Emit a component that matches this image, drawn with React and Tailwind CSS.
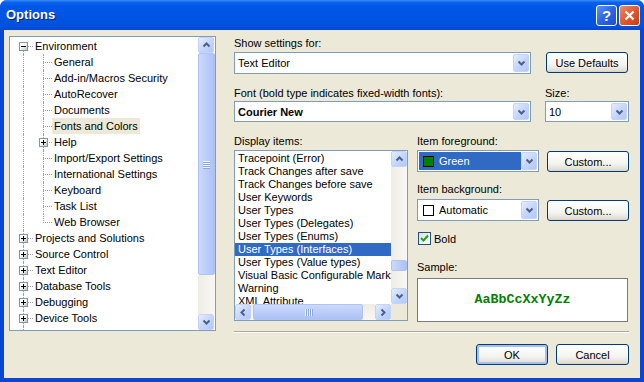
import React from "react";

const FONT = "font-['Liberation_Sans',Arial,sans-serif]";

const tree = [
  { l: 0, t: "Environment", box: "minus", first: true },
  { l: 1, t: "General" },
  { l: 1, t: "Add-in/Macros Security" },
  { l: 1, t: "AutoRecover" },
  { l: 1, t: "Documents" },
  { l: 1, t: "Fonts and Colors", sel: true },
  { l: 1, t: "Help", box: "plus" },
  { l: 1, t: "Import/Export Settings" },
  { l: 1, t: "International Settings" },
  { l: 1, t: "Keyboard" },
  { l: 1, t: "Task List" },
  { l: 1, t: "Web Browser", last: true },
  { l: 0, t: "Projects and Solutions", box: "plus" },
  { l: 0, t: "Source Control", box: "plus" },
  { l: 0, t: "Text Editor", box: "plus" },
  { l: 0, t: "Database Tools", box: "plus" },
  { l: 0, t: "Debugging", box: "plus" },
  { l: 0, t: "Device Tools", box: "plus" },
  { l: 0, t: "", id: "more" },
];

const items = [
  "Tracepoint (Error)",
  "Track Changes after save",
  "Track Changes before save",
  "User Keywords",
  "User Types",
  "User Types (Delegates)",
  "User Types (Enums)",
  "User Types (Interfaces)",
  "User Types (Value types)",
  "Visual Basic Configurable Marker",
  "Warning",
  "XML Attribute",
];

function Chevron({ dir = "down" }) {
  const pts = {
    down: "1.5,1.5 4.5,4.5 7.5,1.5",
    up: "1.5,4.5 4.5,1.5 7.5,4.5",
    left: "4.5,1.5 1.5,4.5 4.5,7.5",
    right: "1.5,1.5 4.5,4.5 1.5,7.5",
  };
  const vertical = dir === "up" || dir === "down";
  return (
    <svg
      width={vertical ? 9 : 6}
      height={vertical ? 6 : 9}
      viewBox={vertical ? "0 0 9 6" : "0 0 6 9"}
    >
      <polyline points={pts[dir]} fill="none" stroke="#4d6185" strokeWidth="2" />
    </svg>
  );
}

function SbButton({ dir }) {
  return (
    <div className="flex h-[16px] w-[16px] shrink-0 items-center justify-center rounded-[2px] border border-[#c4d4f8] bg-[linear-gradient(135deg,#e4ecfe,#c4d5fc_55%,#b3c7f5)]">
      <Chevron dir={dir} />
    </div>
  );
}

function Grip({ vertical }) {
  return vertical ? (
    <div className="flex flex-col gap-[1px]">
      {[0, 1, 2, 3].map((i) => (
        <div key={i} className="h-[1px] w-[7px] bg-[#eef3fe] shadow-[0_1px_0_#8ca7e6]" />
      ))}
    </div>
  ) : (
    <div className="flex gap-[1px]">
      {[0, 1, 2, 3].map((i) => (
        <div key={i} className="h-[7px] w-[1px] bg-[#eef3fe] shadow-[1px_0_0_#8ca7e6]" />
      ))}
    </div>
  );
}

function ComboButton() {
  return (
    <div className="flex h-full w-[16px] shrink-0 items-center justify-center rounded-[2px] border border-[#c4d4f8] bg-[linear-gradient(135deg,#e4ecfe,#c4d5fc_55%,#b3c7f5)]">
      <Chevron dir="down" />
    </div>
  );
}

function XpButton({ children, className = "", isDefault }) {
  return (
    <div
      className={`flex h-[21px] items-center justify-center rounded-[3px] border border-[#003c74] bg-[linear-gradient(to_bottom,#ffffff,#f4f4f0_60%,#e3e0d6_90%,#d6d0c5)] text-[11px] text-black ${
        isDefault ? "shadow-[inset_0_0_0_2px_#a7bff0]" : ""
      } ${className}`}
    >
      {children}
    </div>
  );
}

function TreeCell({ w, vert, horiz, box }) {
  return (
    <div className={`relative h-full shrink-0 ${w}`}>
      {vert === "full" && (
        <div className="absolute left-[10px] top-0 bottom-0 border-l border-dotted border-[#a0a0a0]" />
      )}
      {vert === "top" && (
        <div className="absolute left-[10px] top-0 h-[9px] border-l border-dotted border-[#a0a0a0]" />
      )}
      {vert === "bottom" && (
        <div className="absolute left-[10px] top-[8px] bottom-0 border-l border-dotted border-[#a0a0a0]" />
      )}
      {horiz && (
        <div className="absolute left-[10px] right-0 top-[8px] border-t border-dotted border-[#a0a0a0]" />
      )}
      {box && (
        <div className="absolute left-[6px] top-[4px] flex h-[9px] w-[9px] items-center justify-center border border-[#7898b5] bg-[linear-gradient(135deg,#ffffff_35%,#c6c3b8)]">
          <div className="relative h-[5px] w-[5px]">
            <div className="absolute left-0 top-[2px] h-[1px] w-[5px] bg-black" />
            {box === "plus" && (
              <div className="absolute left-[2px] top-0 h-[5px] w-[1px] bg-black" />
            )}
          </div>
        </div>
      )}
    </div>
  );
}

function TreeRow({ row }) {
  return (
    <div className="flex h-[16px] items-center">
      {row.l === 0 ? (
        <TreeCell w="w-[20px]" vert={row.first ? "bottom" : "full"} horiz={!!row.t} box={row.box} />
      ) : (
        <>
          <TreeCell w="w-[20px]" vert="full" />
          <TreeCell w="w-[19px]" vert={row.last ? "top" : "full"} horiz box={row.box} />
        </>
      )}
      {row.t && (
        <div
          className={`flex h-full items-center whitespace-nowrap px-[2px] ${
            row.sel ? "bg-[#ece9d8]" : ""
          }`}
        >
          {row.t}
        </div>
      )}
    </div>
  );
}

function TreePanel() {
  return (
    <div className="flex h-[295px] w-[207px] shrink-0 border border-[#7f9db9] bg-white">
      <div className="flex-1 overflow-hidden pt-[1px] pl-[3px]">
        {tree.map((row) => (
          <TreeRow key={row.id || row.t} row={row} />
        ))}
      </div>
      <div className="flex w-[17px] flex-col">
        <SbButton dir="up" />
        <div className="flex h-[222px] items-center justify-center rounded-[2px] border border-[#b0c4f3] bg-[linear-gradient(to_right,#cbd9fd,#bccdf9_50%,#adc1f4)]">
          <Grip vertical />
        </div>
        <div className="flex-1 bg-[linear-gradient(to_right,#eeede5,#f8f7f3)]" />
        <SbButton dir="down" />
      </div>
    </div>
  );
}

function DisplayList() {
  return (
    <div className="flex h-[171px] w-[174px] shrink-0 flex-col border border-[#7f9db9] bg-white">
      <div className="flex min-h-0 flex-1">
        <div className="min-w-0 flex-1 overflow-hidden pt-[1px]">
          {items.map((it) => (
            <div
              key={it}
              className={`h-[13px] whitespace-nowrap pl-[3px] leading-[13px] ${
                it === "User Types (Interfaces)" ? "bg-[#316ac5] text-white" : ""
              }`}
            >
              {it}
            </div>
          ))}
        </div>
        <div className="flex w-[16px] flex-col">
          <SbButton dir="up" />
          <div className="flex flex-1 flex-col bg-[linear-gradient(to_right,#eeede5,#f8f7f3)]">
            <div className="h-[93px]" />
            <div className="h-[11px] rounded-[2px] border border-[#b0c4f3] bg-[linear-gradient(to_right,#cbd9fd,#bccdf9_50%,#adc1f4)]" />
          </div>
          <SbButton dir="down" />
        </div>
      </div>
      <div className="flex h-[16px]">
        <div className="flex flex-1">
          <SbButton dir="left" />
          <div className="flex flex-1 bg-[linear-gradient(to_bottom,#eeede5,#f8f7f3)]">
            <div className="w-[2px]" />
            <div className="flex w-[110px] items-center justify-center rounded-[2px] border border-[#b0c4f3] bg-[linear-gradient(to_bottom,#cbd9fd,#bccdf9_50%,#adc1f4)]">
              <Grip />
            </div>
          </div>
          <SbButton dir="right" />
        </div>
        <div className="w-[16px] bg-[#ece9d8]" />
      </div>
    </div>
  );
}

function ColorCombo({ selected, swatch, label }) {
  return (
    <div className="flex h-[22px] w-[122px] shrink-0 border border-[#7f9db9] bg-white p-[1px]">
      <div
        className={`flex flex-1 items-center gap-[5px] pl-[4px] ${
          selected ? "bg-[#316ac5] text-white" : ""
        }`}
      >
        <div className={`h-[11px] w-[11px] border border-black ${swatch}`} />
        <span>{label}</span>
      </div>
      <ComboButton />
    </div>
  );
}

export default function App() {
  return (
    <div className={`h-[382px] w-[644px] bg-white ${FONT} text-[11px] leading-[14px] text-black`}>
      <div className="flex h-full w-full flex-col overflow-hidden rounded-t-[7px] bg-[#0847d6]">
        {/* title bar */}
        <div className="flex h-[30px] shrink-0 items-center bg-[linear-gradient(to_bottom,#3b8cf5_0%,#0b62ee_8%,#0057e6_22%,#0053e1_70%,#0350dc_90%,#0a46c8_100%)] pl-[6px] pr-[4px]">
          <div className="flex-1 text-[13px] font-bold text-white [text-shadow:1px_1px_#0c1b8a]">
            Options
          </div>
          <div className="flex h-[21px] w-[21px] items-center justify-center rounded-[3px] border border-white bg-[linear-gradient(135deg,#5d94f7,#2c65e6_50%,#1a4fd3)] text-[15px] font-bold leading-none text-white">
            ?
          </div>
          <div className="ml-[2px] flex h-[21px] w-[21px] items-center justify-center rounded-[3px] border border-white bg-[linear-gradient(135deg,#f08a65,#e25a2f_50%,#c63c15)]">
            <svg width="11" height="11" viewBox="0 0 11 11">
              <path d="M1.5 1.5 L9.5 9.5 M9.5 1.5 L1.5 9.5" stroke="white" strokeWidth="2.2" />
            </svg>
          </div>
        </div>

        {/* body */}
        <div className="mx-[4px] mb-[4px] flex flex-1 bg-[#ece9d8] pt-[6px] pl-[5px]">
          <TreePanel />

          <div className="ml-[18px] flex w-[395px] flex-col">
            <div className="h-[14px]">Show settings for:</div>
            <div className="mt-[2px] flex items-start">
              <div className="flex h-[22px] w-[297px] shrink-0 border border-[#7f9db9] bg-white p-[1px]">
                <div className="flex flex-1 items-center pl-[2px]">Text Editor</div>
                <ComboButton />
              </div>
              <XpButton className="ml-[15px] w-[82px]">Use Defaults</XpButton>
            </div>

            <div className="mt-[12px] flex h-[14px]">
              <div className="w-[297px]">Font (bold type indicates fixed-width fonts):</div>
              <div className="ml-[14px]">Size:</div>
            </div>
            <div className="mt-[1px] flex">
              <div className="flex h-[21px] w-[297px] shrink-0 border border-[#7f9db9] bg-white p-[1px]">
                <div className="flex flex-1 items-center pl-[2px] font-bold">Courier New</div>
                <ComboButton />
              </div>
              <div className="ml-[14px] flex h-[21px] w-[84px] shrink-0 border border-[#7f9db9] bg-white p-[1px]">
                <div className="flex flex-1 items-center pl-[2px]">10</div>
                <ComboButton />
              </div>
            </div>

            <div className="mt-[12px] flex h-[14px]">
              <div className="w-[183px]">Display items:</div>
              <div>Item foreground:</div>
            </div>
            <div className="mt-[2px] flex">
              <DisplayList />
              <div className="ml-[9px] flex w-[212px] flex-col">
                <div className="flex items-start">
                  <ColorCombo selected swatch="bg-[#008000]" label="Green" />
                  <XpButton className="mt-[1px] ml-auto w-[82px]">Custom...</XpButton>
                </div>
                <div className="mt-[10px] h-[14px]">Item background:</div>
                <div className="mt-[3px] flex items-start">
                  <ColorCombo swatch="bg-white" label="Automatic" />
                  <XpButton className="mt-[1px] ml-auto w-[82px]">Custom...</XpButton>
                </div>
                <div className="mt-[11px] flex h-[13px] items-center gap-[3px]">
                  <div className="ml-[1px] flex h-[13px] w-[13px] items-center justify-center border border-[#1c5180] bg-[linear-gradient(135deg,#dcdcd7,#ffffff)]">
                    <svg width="9" height="9" viewBox="0 0 9 9">
                      <polyline points="1,4 3.5,6.5 8,1.5" fill="none" stroke="#21a121" strokeWidth="2" />
                    </svg>
                  </div>
                  <span>Bold</span>
                </div>
                <div className="mt-[15px] h-[14px]">Sample:</div>
                <div className="mt-[4px] flex h-[44px] w-[211px] items-center justify-center border border-[#7a7a7a] bg-white font-['Liberation_Mono',monospace] text-[13.33px] font-bold text-[#008000]">
                  AaBbCcXxYyZz
                </div>
              </div>
            </div>

            <div className="mt-[9px] border-t border-b border-t-[#aca899] border-b-white" />
            <div className="mt-[11px] flex justify-end gap-[8px]">
              <XpButton isDefault className="w-[72px]">
                OK
              </XpButton>
              <XpButton className="w-[73px]">Cancel</XpButton>
            </div>
          </div>
        </div>
      </div>
    </div>
  );
}
